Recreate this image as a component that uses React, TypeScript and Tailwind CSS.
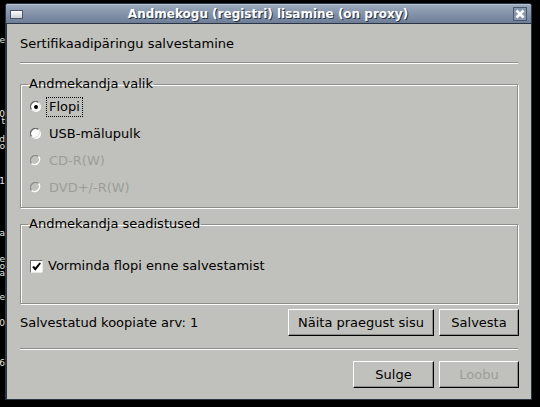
import type { ReactNode } from 'react'

const font = { fontFamily: '"DejaVu Sans", Verdana, sans-serif' }

// fragments of the desktop text showing on the left edge, behind the window
const edgeGlyphs: [number, string][] = [
  [37, 'e'], [111, '0\nt'], [136, 'd\no'], [178, '1'],
  [230, 'a'], [256, 'e\no\na'], [294, 'e'], [320, '0'], [360, '6'],
]

function Radio({ checked, disabled }: { checked?: boolean; disabled?: boolean }) {
  return (
    <svg width="12" height="12" viewBox="0 0 12 12" className="shrink-0">
      <circle cx="6" cy="6" r="5" fill={disabled ? '#c0c1bc' : '#ffffff'} />
      <path d="M1.5 8.5 A5 5 0 0 1 8.5 1.5" fill="none" stroke={disabled ? '#8e8f8b' : '#6d6e6a'} strokeWidth="1.3" />
      <path d="M8.5 1.5 A5 5 0 0 1 1.5 8.5" fill="none" stroke={disabled ? '#ffffff' : '#e8e8e6'} strokeWidth="1.3" />
      {checked && <circle cx="6" cy="6" r="2" fill="#000" />}
    </svg>
  )
}

function RadioRow({ label, checked, disabled, focused }: { label: string; checked?: boolean; disabled?: boolean; focused?: boolean }) {
  return (
    <div className="flex h-[27px] items-center gap-[5px] pl-[8px]">
      <Radio checked={checked} disabled={disabled} />
      <span
        className={`px-[2px] leading-[18px] ${disabled ? 'text-[#9c9d99]' : 'text-black'} ${focused ? 'outline outline-1 outline-dotted outline-black' : ''}`}
      >
        {label}
      </span>
    </div>
  )
}

function Group({ title, className, children }: { title: string; className?: string; children: ReactNode }) {
  return (
    <fieldset className={`mx-[13px] border border-[#8d8e8a] pl-[1px] shadow-[inset_1px_1px_0_#ffffff,1px_1px_0_#ffffff] ${className ?? ''}`}>
      <legend className="ml-[6px] px-[1px] leading-[16px] text-black">{title}</legend>
      {children}
    </fieldset>
  )
}

function Separator({ className }: { className?: string }) {
  return <div className={`mx-[13px] h-[2px] border-t border-[#8d8e8a] border-b border-b-white ${className ?? ''}`} />
}

function Btn({ children, disabled, className }: { children: ReactNode; disabled?: boolean; className?: string }) {
  return (
    <button
      className={`h-[27px] border border-t-white border-l-white border-r-black border-b-black bg-[#c0c1bc] shadow-[inset_-1px_-1px_0_#8d8e8a] text-[13px] ${disabled ? 'text-[#9c9d99]' : 'text-black'} ${className ?? ''}`}
      style={font}
    >
      {children}
    </button>
  )
}

export default function App() {
  return (
    <div className="relative h-[407px] w-[540px] overflow-hidden bg-black" style={font}>
      <div className="absolute left-0 top-0 h-full w-[5px] overflow-hidden">
        {edgeGlyphs.map(([y, ch], i) => (
          <span key={i} className="absolute right-[0px] whitespace-pre-line text-right text-[9px] leading-[7px] text-[#e6e6e6]" style={{ top: y }}>
            {ch}
          </span>
        ))}
      </div>

      <div className="ml-[5px] mt-[3px] flex h-[397px] w-[527px] flex-col rounded-t-[3px] border border-[#2b3442] bg-[#c0c1bc]">
        {/* title bar */}
        <div className="flex h-[19px] items-center rounded-t-[2px] border-t border-t-[#b8c3d3] bg-gradient-to-b from-[#9aa8bc] to-[#6e7e97] px-[4px]">
          <div className="h-[9px] w-[13px] border border-[#4a5668] bg-gradient-to-b from-white to-[#c9cfd8]" />
          <div className="flex-1 text-center text-[12px] font-bold leading-none text-white [text-shadow:1px_1px_0_#2a3340]">
            Andmekogu (registri) lisamine (on proxy)
          </div>
          <div className="flex h-[14px] w-[14px] items-center justify-center border border-[#4d5a6d] bg-[#8797ae]">
            <svg width="10" height="10" viewBox="0 0 10 10">
              <path d="M1.5 1.5 L8.5 8.5 M8.5 1.5 L1.5 8.5" stroke="#fff" strokeWidth="2.6" />
            </svg>
          </div>
        </div>

        {/* content */}
        <div className="flex flex-1 flex-col border-l border-t border-[#2b3442] text-[13px]">
          <div className="mx-[13px] mt-[10px] leading-[20px] text-black">Sertifikaadipäringu salvestamine</div>
          <Separator className="mt-[8px]" />

          <Group title="Andmekandja valik" className="mt-[12px] h-[132px]">
            <div className="mt-[1px] flex flex-col">
              <RadioRow label="Flopi" checked focused />
              <RadioRow label="USB-mälupulk" />
              <RadioRow label="CD-R(W)" disabled />
              <RadioRow label="DVD+/-R(W)" disabled />
            </div>
          </Group>

          <Group title="Andmekandja seadistused" className="mt-[8px] h-[88px]">
            <div className="mt-[25px] flex items-center gap-[5px] pl-[8px]">
              <svg width="13" height="13" viewBox="0 0 13 13" className="shrink-0">
                <rect x="0.5" y="0.5" width="12" height="12" fill="#fff" stroke="#6d6e6a" />
                <path d="M0.5 12.5 H12.5 V0.5" fill="none" stroke="#e8e8e6" />
                <path d="M3 6.5 L5.3 9.2 L10.2 3" fill="none" stroke="#000" strokeWidth="2" />
              </svg>
              <span className="leading-[18px] text-black">Vorminda flopi enne salvestamist</span>
            </div>
          </Group>

          <div className="mx-[12px] mt-[5px] flex items-center">
            <span className="ml-[1px] flex-1 text-black">Salvestatud koopiate arv: 1</span>
            <Btn className="w-[146px]">Näita praegust sisu</Btn>
            <Btn className="ml-[5px] w-[80px]">Salvesta</Btn>
          </div>

          <Separator className="mt-[12px]" />

          <div className="mx-[12px] mt-[11px] flex justify-end">
            <Btn className="w-[81px]">Sulge</Btn>
            <Btn disabled className="ml-[5px] w-[80px]">Loobu</Btn>
          </div>
        </div>
      </div>
    </div>
  )
}
